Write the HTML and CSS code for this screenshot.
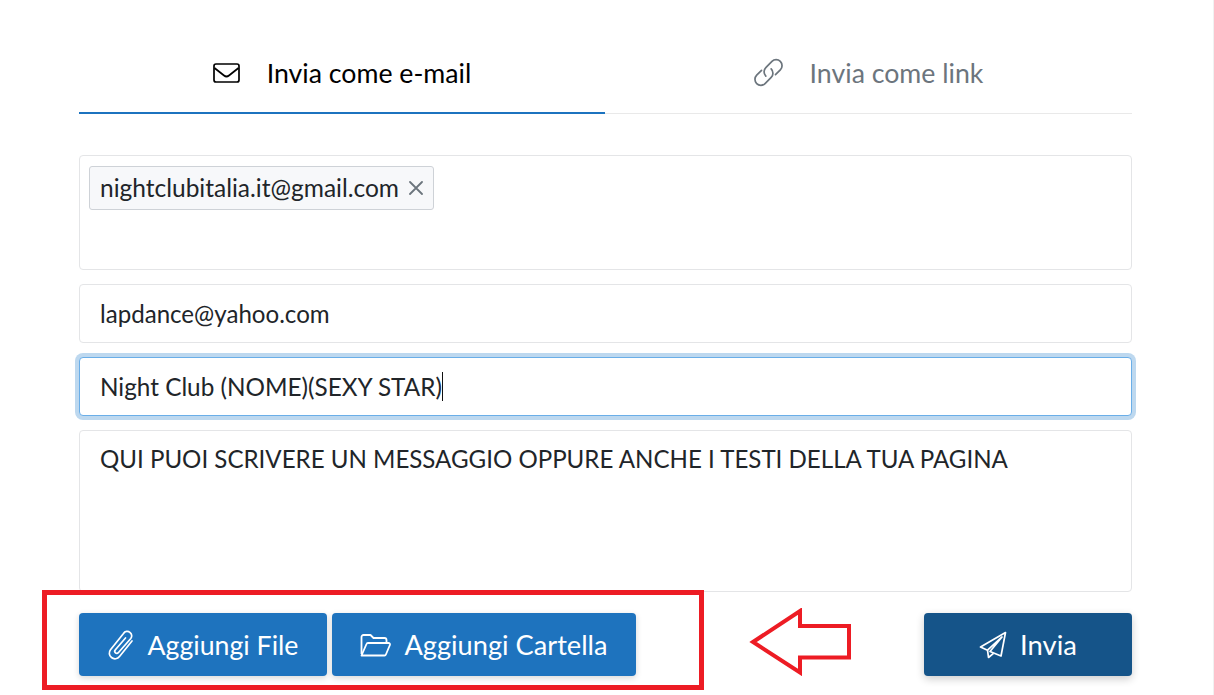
FILE: index.html
```html
<!DOCTYPE html>
<html lang="it">
<head>
<meta charset="utf-8">
<title>Invia</title>
<link rel="stylesheet" href="styles.css">
</head>
<body>
<main class="panel">
  <nav class="tabs">
    <div class="tab active">
      <svg class="tab-icon" viewBox="0 0 27 20" fill="none" stroke="currentColor" stroke-width="1.700"><rect x="1" y="1" width="25" height="18" rx="2"/><path d="M1.500 5 11 12.500a4 4 0 0 0 5 0L25.500 5"/></svg>
      <span>Invia come e-mail</span>
    </div>
    <div class="tab">
      <svg class="tab-icon link" viewBox="0 0 27 27" fill="none" stroke="currentColor" stroke-width="1.600" stroke-linecap="round"><path d="M20 15.500 24.500 11a5.500 5.500 0 0 0-7.800-7.800L11 9a5.500 5.500 0 0 0 0 7.800"/><path d="M7 11.500 2.500 16a5.500 5.500 0 0 0 7.800 7.800L16 18a5.500 5.500 0 0 0 0-7.800"/></svg>
      <span>Invia come link</span>
    </div>
  </nav>

  <div class="fields">
    <div class="field to">
      <span class="chip">nightclubitalia.it@gmail.com
        <svg class="chip-x" viewBox="0 0 14 14" stroke="currentColor" stroke-width="1.800" stroke-linecap="round"><path d="M1 1l12 12M13 1 1 13"/></svg>
      </span>
    </div>
    <div class="field line">lapdance@yahoo.com</div>
    <div class="field line focus">Night Club (NOME)(SEXY STAR)<span class="caret"></span></div>
    <div class="field message">QUI PUOI SCRIVERE UN MESSAGGIO OPPURE ANCHE I TESTI DELLA TUA PAGINA</div>
  </div>

  <div class="actions">
    <div class="group">
      <button class="btn file">
        <svg class="btn-icon" viewBox="0 0 26 30" fill="none" stroke="currentColor" stroke-width="1.700" stroke-linecap="round" stroke-linejoin="round"><path d="M24 11 11.500 26.500a5.500 5.500 0 0 1-8 1 5.500 5.500 0 0 1-1-7.800L15.500 3.500a4.200 4.200 0 0 1 6.500-1 4.200 4.200 0 0 1 .8 6L10.500 22.500a2 2 0 0 1-3 .3 2 2 0 0 1-.3-2.800L17.500 8"/></svg>
        <span>Aggiungi File</span>
      </button>
      <button class="btn folder">
        <svg class="btn-icon wide" viewBox="0 0 31 24" fill="none" stroke="currentColor" stroke-width="1.800" stroke-linejoin="round"><path d="M1.500 21V4a2 2 0 0 1 2-2h7l3 3h11a2 2 0 0 1 2 2v3"/><path d="M1.500 22.500 6.500 11a1.500 1.500 0 0 1 1.500-1h20.500a1.500 1.500 0 0 1 1.400 2l-4 9.500a1.500 1.500 0 0 1-1.500 1H1.500z"/></svg>
        <span>Aggiungi Cartella</span>
      </button>
    </div>
    <button class="btn send">
      <svg class="btn-icon send-icon" viewBox="0 0 28 28" fill="none" stroke="currentColor" stroke-width="1.700" stroke-linejoin="round"><path d="M26.500 1.500 1.500 16l7 3.200L23 6 11 20.500l11 4.500L26.500 1.500z"/><path d="M8.500 19.200 9.500 26.500 14.500 22.300"/></svg>
      <span>Invia</span>
    </button>
  </div>
</main>

<div class="annotation-box"></div>
<svg class="annotation-arrow" viewBox="0 0 104 68" fill="none" stroke="#ed1c24" stroke-width="4" stroke-linejoin="miter"><path d="M4 34 51 3v15h49v31.500H51v15z"/></svg>
<div class="edge"></div>
</body>
</html>
```
FILE: styles.css
```css
* { box-sizing: border-box; }

html, body {
  margin: 0;
  height: 695px;
  overflow: hidden;
  background: #fff;
}

body {
  font-family: Lato, "Open Sans", sans-serif;
  font-size: 24.1px;
  color: #212529;
  position: relative;
}

.panel {
  width: 1053px;
  margin-left: 79px;
  padding-top: 33px;
  display: flex;
  flex-direction: column;
}

.tabs {
  display: flex;
  height: 81px;
  border-bottom: 1px solid #e9e9e9;
}

.tab {
  flex: 0 0 526px;
  height: 81px;
  display: flex;
  align-items: center;
  justify-content: center;
  gap: 27px;
  border-bottom: 2px solid transparent;
  color: #6c757d;
  font-size: 26.7px;
}

.tab:last-child { flex-grow: 1; }

.tab.active {
  color: #000;
  border-bottom-color: #1c73bf;
}

.tab-icon { width: 27px; height: 20px; flex: none; }
.tab-icon.link { width: 29px; height: 29px; }

.fields {
  margin-top: 41px;
  display: flex;
  flex-direction: column;
  gap: 14px;
}

.field {
  border: 1px solid #e4e5e7;
  border-radius: 4px;
  background: #fff;
  padding: 0 20px;
  line-height: 30px;
}

.field.to { height: 115px; padding: 10px 9px; }

.field.line {
  height: 59px;
  display: flex;
  align-items: center;
}

.field.focus {
  font-size: 24.3px;
  border-color: #6aaee8;
  box-shadow: 0 0 0 4px #bdd8ef;
}

.caret {
  display: inline-block;
  width: 1px;
  height: 29px;
  background: #111;
}

.field.message { height: 162px; padding-top: 13px; }

.chip {
  display: inline-flex;
  align-items: center;
  gap: 10px;
  height: 44px;
  padding: 0 10px;
  background: #f7f8fa;
  border: 1px solid #ced2d7;
  border-radius: 3px;
  font-size: 24.5px;
}

.chip-x { width: 14px; height: 14px; color: #6c757d; }

.actions {
  margin-top: 21px;
  display: flex;
  justify-content: space-between;
}

.group { display: flex; gap: 5px; }

.btn {
  height: 63px;
  border: 0;
  border-radius: 4px;
  color: #fff;
  font: inherit;
  display: flex;
  align-items: center;
  justify-content: center;
  gap: 14px;
  background: #1e73be;
  box-shadow: 0 2px 6px rgba(0, 0, 0, .16);
  padding: 0;
}

.btn.file { width: 248px; font-size: 26.7px; }
.btn.folder { width: 304px; font-size: 27.2px; gap: 13px; }
.btn.send { width: 208px; font-size: 27.4px; gap: 13px; background: #155489; box-shadow: 0 3px 8px rgba(0, 0, 0, .2); }

.btn-icon { width: 26px; height: 30px; flex: none; }
.btn-icon.wide { width: 31px; height: 24px; }
.btn-icon.send-icon { width: 28px; height: 28px; }

.annotation-box {
  position: absolute;
  left: 42px;
  top: 590px;
  width: 662px;
  height: 100px;
  border: 5px solid #ed1c24;
}

.annotation-arrow {
  position: absolute;
  left: 749px;
  top: 608px;
  width: 104px;
  height: 68px;
}

.edge {
  position: absolute;
  top: 0;
  right: 0;
  width: 1px;
  height: 695px;
  background: #f1f1f1;
}
```
